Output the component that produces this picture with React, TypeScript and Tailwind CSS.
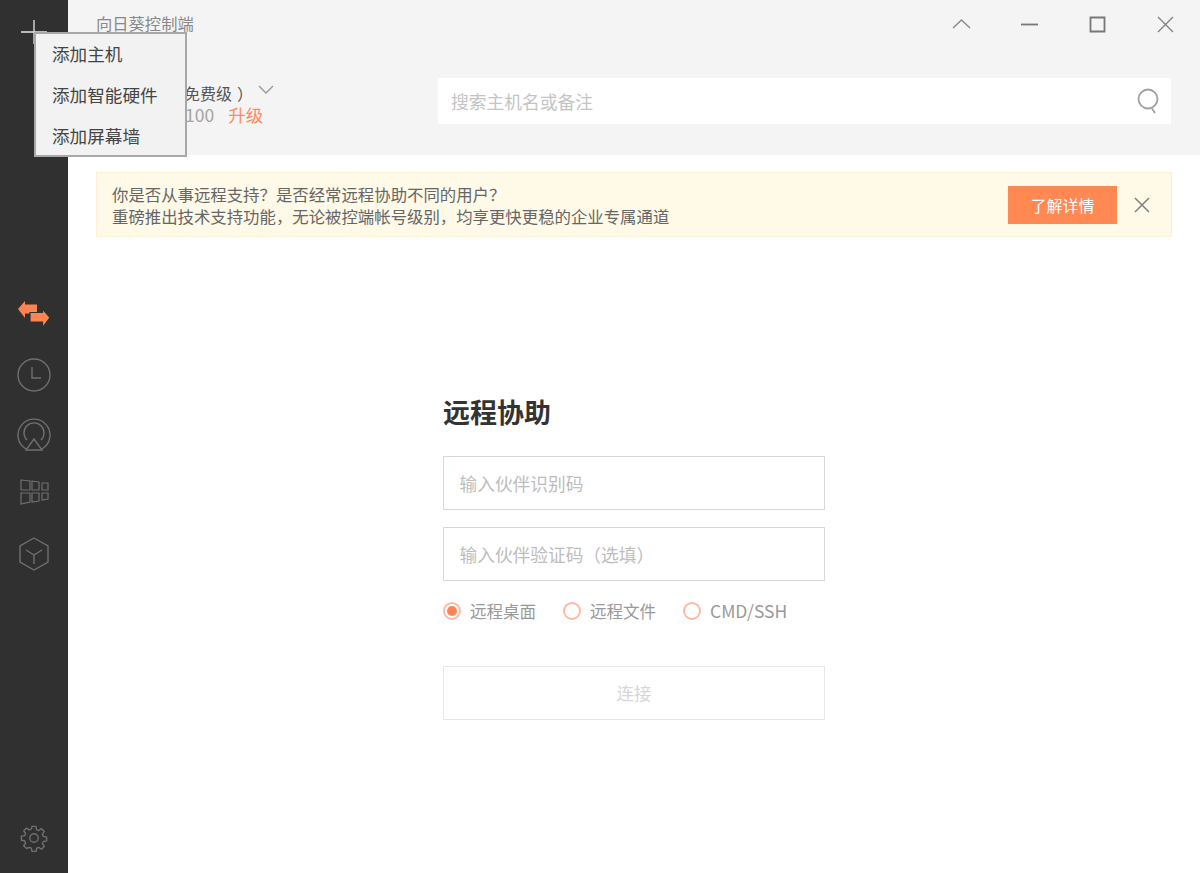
import React from "react";

const font = { fontFamily: '"Noto Sans CJK SC", "Noto Sans", sans-serif' };

function Radio({ label, on, latin }: { label: string; on?: boolean; latin?: boolean }) {
  return (
    <div className="flex items-center gap-[9px]">
      <span className="flex h-[18px] w-[18px] items-center justify-center rounded-full border-2 border-[#ffb9a3]">
        {on && <span className="h-[10px] w-[10px] rounded-full bg-[#ff8453]" />}
      </span>
      <span className={latin ? "text-[17.5px] leading-[20px] text-[#999999]" : "text-[16.5px] leading-[20px] text-[#999999]"}>{label}</span>
    </div>
  );
}

function Side() {
  return (
    <aside className="relative flex w-[68px] shrink-0 flex-col items-center bg-[#303030] pb-[21px]">
      <svg width="28" height="28" viewBox="0 0 28 28" className="mt-[18px]" fill="none" stroke="#e6e6e6" strokeWidth="1.3">
        <path d="M14 2v24M1 14h26" />
      </svg>
      <div className="mt-[254px] flex flex-col items-center gap-[28px]">
        <svg width="34" height="30" viewBox="0 0 34 30" fill="#ff8550">
          <path d="M1 9 8 1v3.500h12v9H8V18z" />
          <path d="M33 17.500 25.500 27.500V22H13v-9.500h12.500V9z" stroke="#303030" strokeWidth="1.200" />
        </svg>
        <svg width="34" height="34" viewBox="0 0 34 34" fill="none" stroke="#6f6f6f" strokeWidth="1.400">
          <circle cx="17" cy="17" r="16" />
          <path d="M15 9v11h9" />
        </svg>
        <svg width="34" height="34" viewBox="0 0 34 34" fill="none" stroke="#6f6f6f" strokeWidth="1.400" className="-mt-[2px]">
          <path d="M9 31A16 16 0 1 1 25 31" />
          <path d="M10 22a10 10 0 1 1 14 0" />
          <path d="M17 21l8 11H9z" />
        </svg>
        <svg width="30" height="28" viewBox="0 0 30 28" fill="none" stroke="#6f6f6f" strokeWidth="1.200" className="-mt-[1px]">
          <path d="M2 1l9 1v9H2zM13 2l7 1v8h-7zM23 4l6 0v7h-6zM2 14h9v9l-9 2zM13 14h7v8l-7 1zM23 14h6v6l-6 1z" />
        </svg>
        <svg width="32" height="34" viewBox="0 0 32 34" fill="none" stroke="#6f6f6f" strokeWidth="1.400" className="mt-[2px]">
          <path d="M16 1l14 8v16l-14 8-14-8V9z" />
          <path d="M8 13l8 5 8-5M16 18v9" />
        </svg>
      </div>
      <svg width="28" height="28" viewBox="0 0 24 24" className="mt-auto" fill="none" stroke="#6f6f6f" strokeWidth="1.200" strokeLinejoin="round">
        <path d="M10.300 2h3.400l.5 2.800 1.900.8 2.300-1.600 2.400 2.400-1.600 2.300.8 1.900 2.800.5v3.400l-2.800.5-.8 1.900 1.600 2.300-2.400 2.400-2.300-1.600-1.900.8-.5 2.800h-3.400l-.5-2.800-1.900-.8L5.600 21l-2.400-2.400 1.600-2.300-.8-1.900L1.200 13.900v-3.400l2.800-.5.8-1.900-1.600-2.300L5.600 3.400l2.300 1.600 1.900-.8z" />
        <circle cx="12" cy="12" r="3.600" />
      </svg>
    </aside>
  );
}

function Header() {
  return (
    <header className="h-[155px] shrink-0 bg-[#f4f4f4] pl-[28px] pr-[29px]">
      <div className="flex h-[48px] items-center justify-between">
        <span className="-mt-[2px] text-[16.3px] text-[#888888]">向日葵控制端</span>
        <div className="mr-[-4px] flex items-center gap-[49px]">
          <svg width="19" height="19" viewBox="0 0 19 19" fill="none" stroke="#8a8a8a" strokeWidth="1.500"><path d="M1 13l8.500-8 8.500 8" /></svg>
          <svg width="19" height="19" viewBox="0 0 19 19" fill="none" stroke="#777777" strokeWidth="1.800"><path d="M1 9.500h17" /></svg>
          <svg width="19" height="19" viewBox="0 0 19 19" fill="none" stroke="#777777" strokeWidth="1.800"><path d="M2.500 2.500h14v14h-14z" /></svg>
          <svg width="19" height="19" viewBox="0 0 19 19" fill="none" stroke="#808080" strokeWidth="1.300"><path d="M2 2l15 15M17 2L2 17" /></svg>
        </div>
      </div>
      <div className="mt-[30px] flex items-start justify-between">
        <div className="mt-[3px] flex flex-col pl-[72px]">
          <div className="flex items-center gap-[4px]">
            <span className="text-[16px] leading-[24px] text-[#555555]">（免费级<span className="ml-[5px]">）</span></span>
            <svg width="18" height="12" viewBox="0 0 18 12" fill="none" stroke="#999999" strokeWidth="1.400" className="mb-[6px]"><path d="M2 2l7 7 7-7" /></svg>
          </div>
          <div className="-mt-[1px] flex gap-[14px] pl-[17px] text-[17.5px] leading-[22px]">
            <span className="text-[#a3a3a3]">100</span>
            <span className="text-[#ff8a5c]">升级</span>
          </div>
        </div>
        <div className="flex h-[46px] w-[733px] items-center justify-between bg-white pl-[13px] pr-[10px]">
          <span className="text-[17.75px] text-[#c4c4c4]">搜索主机名或备注</span>
          <svg width="26" height="28" viewBox="0 0 26 28" fill="none" stroke="#a0a0a0" strokeWidth="1.800">
            <circle cx="13" cy="12" r="9.500" />
            <path d="M17 21.500l3 4.500" />
          </svg>
        </div>
      </div>
    </header>
  );
}

function Banner() {
  return (
    <div className="mx-[28px] mt-[17px] flex h-[65px] items-center justify-between border border-[#fdf0d5] bg-[#fff9e8] pl-[15px] pr-[21px]">
      <div className="text-[16.4px] leading-[22px] text-[#666666]">
        <div>你是否从事远程支持？是否经常远程协助不同的用户？</div>
        <div>重磅推出技术支持功能，无论被控端帐号级别，均享更快更稳的企业专属通道</div>
      </div>
      <div className="flex items-center gap-[17px]">
        <button className="h-[38px] w-[109px] bg-[#ff8853] text-[16px] text-white">了解详情</button>
        <svg width="16" height="16" viewBox="0 0 16 16" fill="none" stroke="#808080" strokeWidth="1.500"><path d="M1 1l14 14M15 1L1 15" /></svg>
      </div>
    </div>
  );
}

function Form() {
  return (
    <section className="mx-auto mt-[156px] w-[382px]">
      <h1 className="text-[27px] font-bold leading-[38px] text-[#333333]">远程协助</h1>
      <div className="mt-[25px] flex h-[54px] items-center border-[1.5px] border-[#d8d8d8] px-[15.500px] text-[17.7px] text-[#bdbdbd]">输入伙伴识别码</div>
      <div className="mt-[17px] flex h-[54px] items-center border-[1.5px] border-[#d8d8d8] px-[15.500px] text-[17.7px] text-[#bdbdbd]">输入伙伴验证码（选填）</div>
      <div className="mt-[20px] flex gap-[27px]">
        <Radio label="远程桌面" on />
        <Radio label="远程文件" />
        <Radio label="CMD/SSH" latin />
      </div>
      <button className="mt-[45px] h-[54px] w-full border-[1.5px] border-[#e6e6e6] text-[17.500px] text-[#d6d6d6]">连接</button>
    </section>
  );
}

export default function App() {
  return (
    <div className="relative flex h-[873px] w-[1200px] overflow-hidden bg-white" style={font}>
      <Side />
      <main className="flex min-w-0 flex-1 flex-col">
        <Header />
        <Banner />
        <Form />
      </main>
      <div className="absolute left-[34px] top-[32px] flex h-[125px] w-[153px] flex-col justify-center gap-[13px] border-2 border-[#a8a8a8] bg-[#f2f2f2] pl-[16px] text-[17.6px] leading-[28px] text-[#444444]">
        <div>添加主机</div>
        <div>添加智能硬件</div>
        <div>添加屏幕墙</div>
      </div>
    </div>
  );
}
